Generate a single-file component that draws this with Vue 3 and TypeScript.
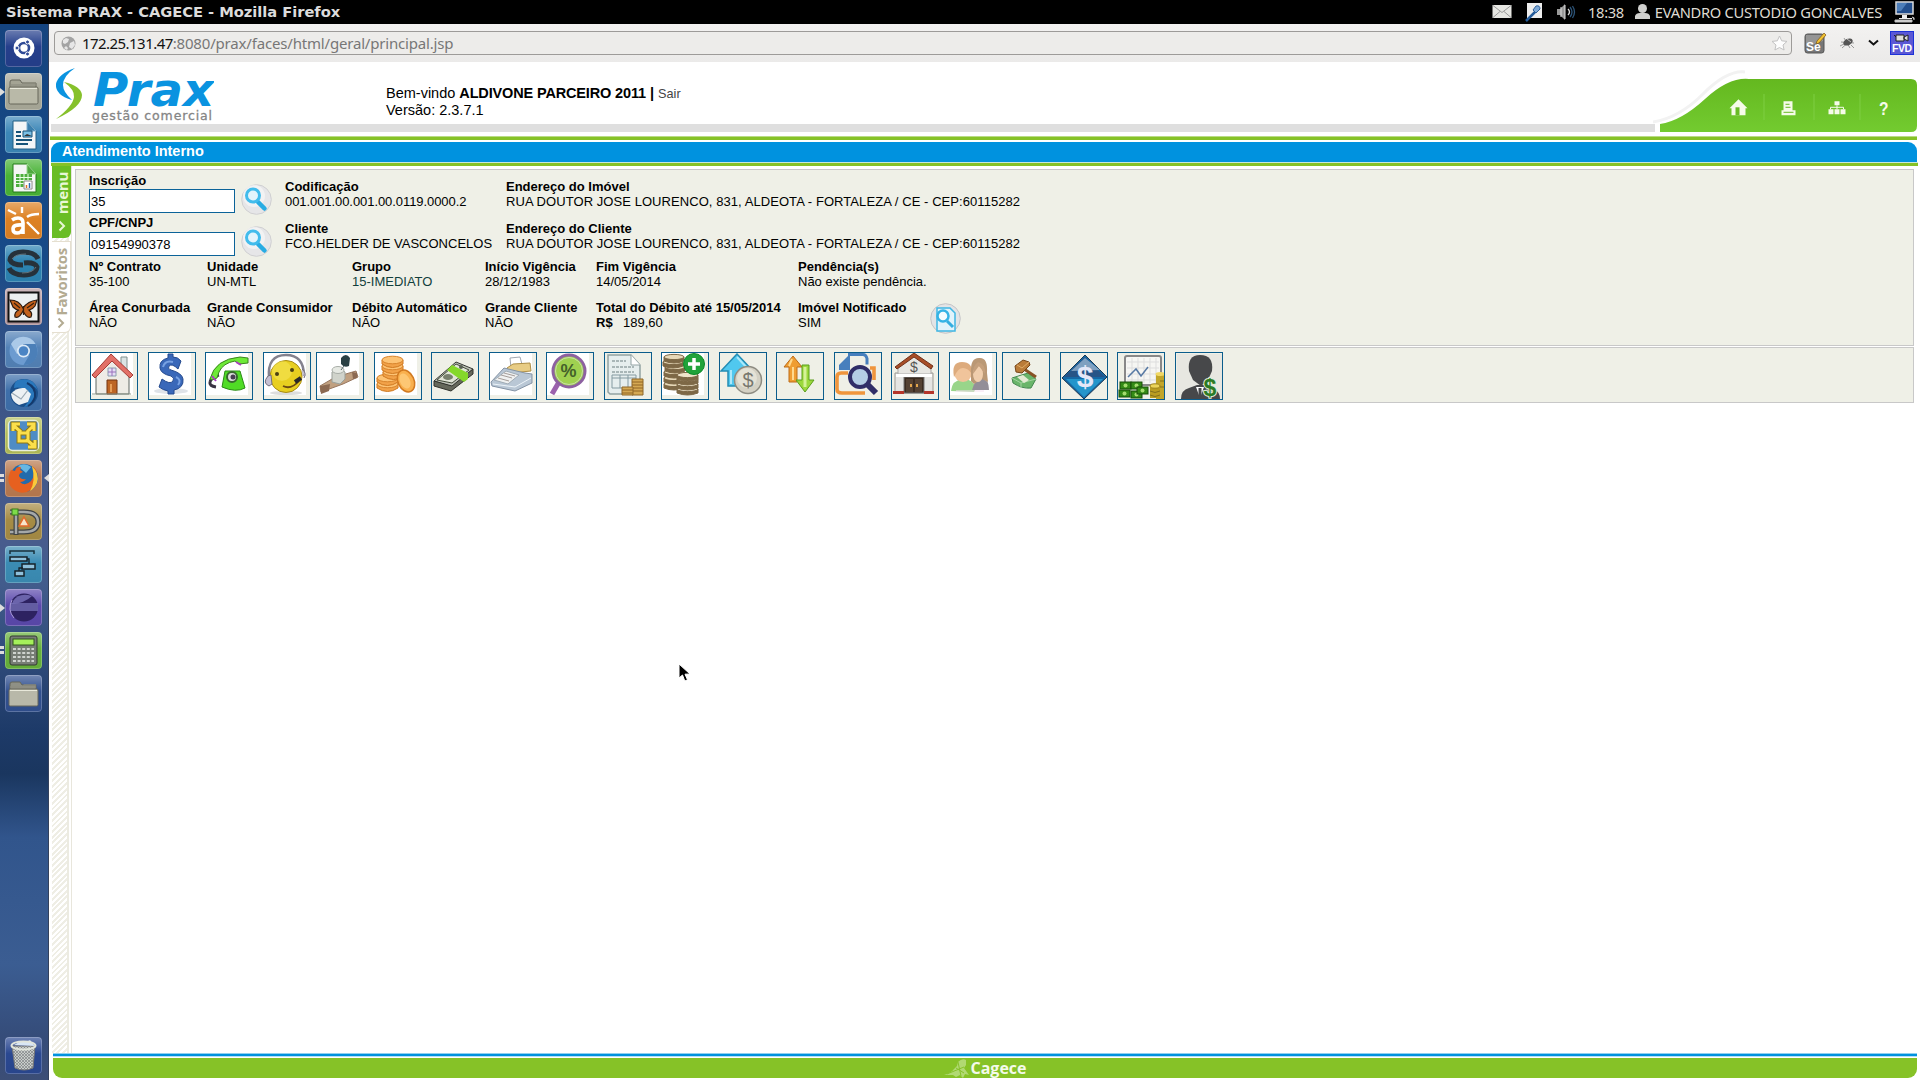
<script setup lang="ts">
import { ref } from 'vue'

interface LauncherItem { name: string; bg: string; art: string; left?: 'arrow' | 'double'; active?: boolean }
interface Tool { name: string; art: string; tight?: boolean; white?: boolean }
interface Cell { label: string; value: string; kind?: string }

const folder = (a: string, b: string) =>
  `<path d="M5 11V9q0-2 2-2h8l2 3h14v5H5z" fill="${a}" stroke="#66665a"/><path d="M5 11h12l2-2h12v4H5z" fill="#8d8d80" opacity=".6"/><rect x="4" y="14" width="29" height="17" rx="1.5" fill="${b}" stroke="#66665a"/><path d="M5 15.5h27" stroke="#e8e8da"/>`

const launcher: LauncherItem[] = [
  { name: 'dash', bg: '#253f8c', art: '<circle cx="19" cy="18" r="10.500" fill="#fff"/><circle cx="19" cy="18" r="5" fill="none" stroke="#2f4a96" stroke-width="2.600"/><g fill="#2f4a96" stroke="#fff" stroke-width="1"><circle cx="12" cy="18" r="2"/><circle cx="22.500" cy="12" r="2"/><circle cx="22.500" cy="24" r="2"/></g>' },
  { name: 'files', bg: '#a9a999', left: 'arrow', art: folder('#a4a494', '#b9b9a8') },
  { name: 'writer', bg: '#3c87b8', art: '<path d="M8 5h14l9 10v18H8z" fill="#f4f6f7" stroke="#205f85"/><path d="M22 5v10h9z" fill="#3a7fae" stroke="#7fb0cf"/><path d="M11 16h5M11 20h5M11 24h16M11 28h12" stroke="#165379" stroke-width="2"/><path d="M18 15h9v6h-9z" fill="#7ac0e6" stroke="#165379"/><path d="M19 20l3-2 5 2z" fill="#333"/>' },
  { name: 'calc-sheet', bg: '#49b336', art: '<path d="M8 5h14l9 10v18H8z" fill="#f4f6f4" stroke="#227a16"/><path d="M22 5v10h9z" fill="#4fa93f" stroke="#9bd890"/><path d="M11 15h16v13H11z" fill="#4eae3e"/><path d="M11 18.500h16M11 21.500h16M11 24.500h16M15 15v13M19 15v13M23 15v13" stroke="#e9ffe5"/><path d="M19 22h8v8h-8z" fill="#fff" stroke="#888"/><path d="M21.500 29v-3" stroke="#e07020" stroke-width="1.500"/><path d="M24.500 29v-5" stroke="#3169b5" stroke-width="1.500"/>' },
  { name: 'aptana', bg: '#dd8123', art: '<g stroke="#fff" fill="none" stroke-width="2.400"><path d="M22 15q4-3 12-3M22 20l12 12M17 11V5M11 12L3 8"/></g><path d="M7 18q3-2 6-2 5 0 5 5v11M18 23q-10-1-10 4 0 4 4 4t6-4" fill="none" stroke="#fff" stroke-width="3.600"/>' },
  { name: 'sync', bg: '#2c83b2', art: '<g fill="none" stroke="#26313a" stroke-width="5"><path d="M33 14q-3-7-15-7T5 15q2 5 13 5"/><path d="M4 23q3 7 15 7t13-8q-2-5-13-4"/></g><path d="M7 14q3-5 14-5M17 28q11 0 14-6" stroke="#61737d" fill="none"/>' },
  { name: 'butterfly', bg: '#b79aa0', art: '<rect x="3.500" y="4.500" width="30" height="29" fill="#eceff0" stroke="#111" stroke-width="2"/><path d="M18 20Q14 12 5 12l3 7q3 3 6 3-5 2-4 7 4 2 8-6 4 8 8 6 2-4-2-7 4-1 6-4l2-6q-9 1-14 8z" fill="#c4611c" stroke="#2b1a10" stroke-width="1.200"/><path d="M9 15l6 5M29 15l-7 5M18.500 18v9" stroke="#39200f" stroke-width="1.200"/>' },
  { name: 'chromium', bg: '#5382b7', art: '<circle cx="18.500" cy="20" r="14" fill="#6c9bd0"/><path d="M18.500 20V13h12A14 14 0 0 0 6 13l6 10z" fill="#aac9e8"/><path d="M18.500 20l6 4-6 10q12 0 14-12 0-5-2-9H18z" fill="#4b7fb8"/><circle cx="18.500" cy="20" r="6.500" fill="#ddeaf6"/><circle cx="18.500" cy="20" r="4.800" fill="#4a84c4"/>' },
  { name: 'thunderbird', bg: '#3e6faa', art: '<circle cx="19" cy="19" r="14" fill="#1b4f8a"/><path d="M14 6q15-4 19 11-3-5-7-5 6 6 3 14-3 6-10 7 8-8 3-14-4-7-13-5 0-6 4-8z" fill="#2a78bd"/><path d="M6 20q5-7 14-6l6 6-3 8-9 3q-7-3-8-11z" fill="#edf1f4"/><path d="M7 19l9 6 7-9" fill="none" stroke="#9ba9b4" stroke-width="1.200"/><path d="M22 9q9 4 8 14-2 6-7 9" fill="none" stroke="#15396b" stroke-width="2"/>' },
  { name: 'vmware', bg: '#b3bd58', art: '<rect x="3.500" y="3.500" width="30" height="30" rx="4" fill="#4f8cc5" stroke="#e9efda" stroke-width="1.500"/><g fill="none" stroke="#907712" stroke-width="5"><path d="M8 14V7h7M8 8l8 7M22 7h7v7M29 8l-7 7M30 23v7h-7M29 29l-8-7M14 16v8h9v-8z"/></g><g fill="none" stroke="#fcdf4b" stroke-width="3"><path d="M8 14V7h7M8 8l8 7M22 7h7v7M29 8l-7 7M30 23v7h-7M29 29l-8-7M14 16v8h9v-8z"/></g>' },
  { name: 'firefox', bg: '#b97a50', left: 'double', active: true, art: '<circle cx="19" cy="18" r="14" fill="#236bac"/><path d="M13 6q7-4 13 1l-5 6z" fill="#67b7e3"/><path d="M6 10q-6 12 2 19 9 7 18 1 8-7 6-17-1-5-5-7 4 9-1 15-6 6-11 1 4 0 6-3-5 1-7-3 0-3 4-4l-3-2q2-4-1-3-3 0-4 4z" fill="#e6601f"/><path d="M27 6q8 8 5 17-3 6-7 8 6-10 2-25z" fill="#f9c93b"/>' },
  { name: 'pencil', bg: '#a68c45', art: '<path d="M5 9h14q14 0 14 10T19 29H5" fill="none" stroke="#404446" stroke-width="5"/><path d="M5 9h14q14 0 14 10T19 29H5" fill="none" stroke="#a4a8a9" stroke-width="2.500"/><path d="M11 12v20" stroke="#404446" stroke-width="5"/><path d="M11 12v19" stroke="#a4a8a9" stroke-width="2.500"/><rect x="7" y="6" width="6" height="6" fill="#7ddc4a" stroke="#377c1a"/><path d="M19 14l5 9H14z" fill="#f8e5ca" stroke="#e4692b" stroke-width="1.500"/>' },
  { name: 'gantt', bg: '#3b8cb4', art: '<path d="M5 8V5h24v3" fill="none" stroke="#17303d" stroke-width="1.500"/><g fill="#8fc1dc" stroke="#16222a" stroke-width="1.500"><path d="M5 11h17v4H5zM17 18h13v5H17zM10 25h9v5h-9z"/></g><path d="M22 13h2v5M18 22h-4v3" fill="none" stroke="#16222a" stroke-width="1.300"/>' },
  { name: 'eclipse', bg: '#5b49ac', left: 'arrow', art: '<circle cx="19" cy="18.500" r="14" fill="#2d2261"/><path d="M8 12q6-9 19-5-7 7-20 8z" fill="#6b64ab"/><path d="M5 14h28v8H5z" fill="#7a76bd" opacity=".7"/><path d="M7 11q-5 10 2 18" fill="none" stroke="#a99ad8"/>' },
  { name: 'calculator', bg: '#67b23b', left: 'double', art: '<rect x="5" y="4" width="27" height="29" rx="2" fill="#777d75" stroke="#343a33"/><rect x="8" y="7" width="21" height="6" fill="#a5f05b" stroke="#31551e"/><g stroke="#cfd3ce" stroke-width="2.200" stroke-dasharray="3 1.600"><path d="M8 17h21M8 21h21M8 25h21M8 29h21"/></g>' },
  { name: 'folder', bg: '#31508f', art: folder('#8f9085', '#b8b8a9') },
]

const bill = (x: number, y: number) => `<g transform="translate(${x} ${y})"><rect width="11" height="7" fill="#338a16" stroke="#174d08"/><circle cx="5.500" cy="3.500" r="2" fill="#a4dc6f"/></g>`
const coin = (x: number, y: number, w: number, a: string, b: string) => `<path d="M${x} ${y}v4q${w / 2} 4 ${w} 0v-4z" fill="${b}" stroke="${b}"/><ellipse cx="${x + w / 2}" cy="${y}" rx="${w / 2}" ry="2.600" fill="${a}" stroke="${b}"/>`
const goldCoin = (x: number, y: number) => `<path d="M${x} ${y}v4q10.500 7 21 0v-4z" fill="#f2a249" stroke="#cf7a22"/><ellipse cx="${x + 10.5}" cy="${y}" rx="10.500" ry="3.800" fill="#fdc374" stroke="#d8842c"/>`

const tools: Tool[] = [
  { name: 'house', white: true, art: '<path d="M30 4h6v14h-6z" fill="#dbe4e4" stroke="#80908e"/><path d="M5 20L21 5l17 16v20H5z" fill="#eeece6" stroke="#5e6662"/><path d="M1 22L20 1l22 21-3 3-18-17L4 25z" fill="#e27067" stroke="#a53c35"/><path d="M16 27h10v14H16z" fill="#bd6524" stroke="#733512"/><path d="M20 31v8" stroke="#e89e57" stroke-width="2"/><path d="M17 15h8v8h-8z" fill="#e5ddf5" stroke="#8a9fae"/><path d="M21 15v8M17 19h8" stroke="#9a72bb"/><path d="M1 41h39" stroke="#919b8d"/>' },
  { name: 'dollar', white: true, art: '<ellipse cx="22" cy="38" rx="17" ry="3" fill="#dfe3e8"/><path d="M32 8q-3-4-8-4V1h-5v4Q10 7 11 15q1 6 11 8 4 2 2 5-3 4-11-2l-3 8q4 3 9 4v3h6v-4q10-2 9-11-1-6-12-9-4-1-2-4 3-3 9 3z" fill="#3a68b9" stroke="#254a8e"/><path d="M14 14q2-7 10-5M27 24q6 3 2 8" stroke="#78a1e2" fill="none" stroke-width="2"/>' },
  { name: 'phone', white: true, art: '<path d="M10 34q-7-1-6-5 1-5 9-7" fill="none" stroke="#393342" stroke-width="3"/><path d="M4 26Q9 6 34 4l8 1v5l-9 1-4-3Q17 10 13 19l-2 6-5 2z" fill="#6eea37" stroke="#3b851f"/><path d="M19 18h15l5 17q-9 5-23-1z" fill="#50dc25" stroke="#2b8c15"/><circle cx="26" cy="24" r="5" fill="#ddd" stroke="#39672f" stroke-width="2"/><circle cx="27" cy="24" r="2.500" fill="#463d50"/><path d="M30 9l5 3M6 23l4 5" stroke="#a93ec0" stroke-width="2"/>' },
  { name: 'support', white: true, art: '<ellipse cx="22" cy="40" rx="16" ry="2" fill="#ddd"/><circle cx="22" cy="23.500" r="16" fill="#e8cf20" stroke="#a88b15"/><circle cx="18" cy="18" r="10" fill="#f8ea60" opacity=".5"/><path d="M5 25Q3 2 22 2q18 0 18 21" fill="none" stroke="#84828e" stroke-width="2.500"/><path d="M4 23q-6 7 1 10l3-2-1-9zM38 16q5 4 2 9" fill="#c5c0d2" stroke="#75707e"/><circle cx="13" cy="21" r="2" fill="#4b4012"/><circle cx="28" cy="17" r="2" fill="#4b4012"/><path d="M19 33q8 4 16-5" fill="none" stroke="#6b4a13" stroke-width="1.800"/><path d="M31 29l6-4" stroke="#292929" stroke-width="4"/>' },
  { name: 'meter', tight: true, white: true, art: '<path d="M3 33l12-7 7-3 17-5 2 6-15 7-22 8z" fill="#c0a080" stroke="#97765e"/><path d="M3 33l10-2-1 7-8 3zM35 19l5 1v5l-4 1z" fill="#8c6a52"/><path d="M15 19q7-5 13 0v7l-5 5-8-2z" fill="#d0d3cb" stroke="#9aa09a"/><ellipse cx="21" cy="17" rx="6" ry="3.500" fill="#e6e9e3" stroke="#a9aea8"/><path d="M24 5q5-6 9 0l-1 8q-5 2-8-2z" fill="#2a4044"/><path d="M27 13l-3 4" stroke="#58676a"/>' },
  { name: 'gold', white: true, art: goldCoin(2, 31) + goldCoin(2, 25) + goldCoin(8, 19) + goldCoin(7, 13) + goldCoin(7, 7) + '<ellipse cx="31" cy="28" rx="8" ry="11.500" transform="rotate(-25 31 28)" fill="#f9b04e" stroke="#d27a21" stroke-width="1.500"/><ellipse cx="30" cy="28" rx="5" ry="8" transform="rotate(-25 30 28)" fill="#fdc774"/>' },
  { name: 'cash', art: '<path d="M2 28l22-19 17 7-20 18z" fill="#bec2b8" stroke="#343732"/><path d="M2 28v5l17 5 22-17v-5L20 33z" fill="#65685b" stroke="#30322c"/><path d="M5 27L24 11l13 6-17 13z" fill="#e1e5d8" stroke="#444d3b"/><path d="M15 17l5-5 16 8v6l-4 3z" fill="#85d82a"/><ellipse cx="16" cy="24" rx="5" ry="3" fill="#78806e"/><circle cx="29" cy="14" r="2" fill="#596055"/>' },
  { name: 'register', white: true, art: '<path d="M20 5l10-1 3 11H21z" fill="#fff" stroke="#a2a8b0"/><path d="M17 15l6-4 17-1 1 8-20 2z" fill="#e8cc84" stroke="#ae8e45"/><path d="M1 29l13-14 21 5 7 1v9l-17 8L2 33z" fill="#b9c7d5" stroke="#8493a5"/><path d="M4 27l12-9 13 4-11 9z" fill="#eff1f1" stroke="#9fabb5"/><path d="M8 25l11 3M11 22l11 3M14 20l11 3" stroke="#a59d99"/><path d="M3 31l22 3 16-9" stroke="#edf4f9" fill="none"/>' },
  { name: 'percent', white: true, art: '<path d="M12 29L5 41" stroke="#9b62ad" stroke-width="5"/><circle cx="22" cy="18" r="16" fill="#a0d150" stroke="#8d61a1" stroke-width="3"/><circle cx="22" cy="18" r="13.500" fill="none" stroke="#c9dfaa"/><text x="21.500" y="24" text-anchor="middle" font-size="18" font-weight="700" font-family="Liberation Sans" fill="#44612a">%</text>' },
  { name: 'invoice', art: '<path d="M3 2h23l9 10v29H5l-2-2z" fill="#e6eeee" stroke="#92a2a3" stroke-width="1.500"/><path d="M26 2v10h9" fill="#fff" stroke="#92a2a3"/><path d="M7 8h14M7 14h22M7 19h22" stroke="#6d7e80" stroke-width="1.200" stroke-dasharray="3 1"/><path d="M7 22h24v13H7zM7 25h24M15 22v13M23 22v13" fill="none" stroke="#849aa1"/><path d="M27 26h11v16H27z" fill="#d5a953" stroke="#8e6629"/><path d="M27 29h11M27 32h11M27 35h11M27 38h11" stroke="#906425"/><path d="M17 34h11v8H17z" fill="#d5a953" stroke="#8e6629"/><path d="M17 37h11M17 40h11" stroke="#906425"/>' },
  { name: 'coins-add', white: true, art: [31, 25, 19, 14, 9, 4].map(y => coin(1 + (y % 3), y, 20, '#e6d8b8', '#7d6846')).join('') + [36, 31, 26, 22].map(y => coin(15, y, 21, '#efe4ca', '#7d6846')).join('') + '<circle cx="32" cy="11" r="10.500" fill="#20a33a" stroke="#0c8a29"/><path d="M32 5v12M26 11h12" stroke="#fff" stroke-width="3.500"/>' },
  { name: 'raise', art: '<path d="M17 1l16 17h-7v15H8V18H1z" fill="#50c8ef" stroke="#238cb4" stroke-width="1.500"/><path d="M17 4l10 11M11 17v14" stroke="#abe8fa" stroke-width="2"/><circle cx="28" cy="27" r="13.500" fill="#d4d1c4" stroke="#8e8c82" stroke-width="1.500"/><circle cx="27" cy="25" r="10" fill="#efede3" opacity=".6"/><text x="28" y="34" text-anchor="middle" font-size="20" font-family="Liberation Sans" fill="#77776e">$</text>' },
  { name: 'swap', art: '<path d="M16 3l9 11h-5v15h-8V14H7z" fill="#ef9d32" stroke="#bd6c19"/><path d="M15 6l-3 7M16 14v13" stroke="#ffd98d" stroke-width="2"/><path d="M25 12h7v15h5l-9 12-9-12h6z" fill="#9bd83c" stroke="#5b9f1c"/><path d="M28 14v20" stroke="#d5f299" stroke-width="3"/>' },
  { name: 'search-docs', art: '<path d="M13 1.500h15q3 0 4 4v6" fill="none" stroke="#477fbd" stroke-width="3"/><path d="M15 1L4 12v5h11z" fill="#477fbd"/><path d="M13 20H6q-4 0-4 4v12q0 4 5 4h23M35 15h4v12" fill="none" stroke="#f0953c" stroke-width="3.600"/><circle cx="25" cy="24" r="10" fill="#b4cee5" stroke="#302e68" stroke-width="4"/><path d="M32 31l9 9" stroke="#302e68" stroke-width="6"/>' },
  { name: 'bank', art: '<path d="M3 20h38v20H3z" fill="#e4e4e2" stroke="#9b9993"/><path d="M6 12L22 2l17 11v8H6z" fill="#e7e6e2" stroke="#aaa"/><path d="M3 14L22 0l19 13-2 3L22 4 5 16z" fill="#a84d27" stroke="#71321c"/><path d="M12 24h20v16H12z" fill="#3a2b20" stroke="#777"/><path d="M14 26h7v13h-7zM23 26h7v13h-7z" fill="#544133"/><path d="M4 21h36v3H4z" fill="#fff"/><path d="M1 38h11v3H1zM32 38h10v3H32z" fill="#b4352a"/><path d="M19 31v3M25 31v3" stroke="#e3a64c" stroke-width="2"/><text x="22" y="19" text-anchor="middle" font-size="14" font-family="Liberation Sans" fill="#555">$</text>' },
  { name: 'people', white: true, art: '<g opacity=".88"><path d="M1 38q1-11 12-12 10 0 13 9l-2 4z" fill="#8bd07a"/><path d="M22 37q3-11 9-12 8 1 8 12z" fill="#85808a"/><circle cx="13" cy="20" r="9" fill="#efbd8e"/><path d="M4 24Q1 9 12 9q11 0 10 12-4-6-9-6-5 0-9 9z" fill="#d9a06c"/><path d="M21 20Q20 4 30 5q8 0 7 15l1 9-6-3-8 5-3-3z" fill="#b18a62"/><ellipse cx="28" cy="21" rx="5" ry="8" fill="#efc8a2"/><path d="M28 9q-5 3-5 12l6-8 6 8q1-10-7-12z" fill="#bc926a"/></g><path d="M6 38h28" stroke="#f5dff0"/>' },
  { name: 'auction', tight: true, art: '<path d="M9 25l16-5 8 6-5 9q-9 1-18-5z" fill="#6ab56a" stroke="#448750"/><path d="M9 25l9 5 15-4M18 30v5" fill="none" stroke="#a2d3a0"/><path d="M14 24l6-2 6 5-5 3z" fill="#e4ead3"/><path d="M18 14l15 10" stroke="#885224" stroke-width="3"/><path d="M12 13l8-6 6 2 1 3-8 8-6-1z" fill="#ba7c39" stroke="#774719"/><path d="M14 12l5 3 7-6" stroke="#e1ae68" fill="none"/>' },
  { name: 'diamond', art: '<path d="M24 2l22 22-23 22L1 25z" fill="#1568a5" stroke="#1c3852"/><path d="M24 4l20 20H3z" fill="#275487"/><path d="M24 5L10 18l29-1z" fill="#a5c0d8" opacity=".7"/><path d="M5 26h37L23 44z" fill="#2495cb"/><text x="24" y="34" text-anchor="middle" font-size="30" font-weight="700" font-family="Liberation Sans" fill="#e4e7f7">$</text>' },
  { name: 'finance', art: '<rect x="7" y="3" width="36" height="29" rx="2" fill="#f6f6f3" stroke="#888" stroke-width="2"/><path d="M9 9h32M9 15h32M9 21h32M9 27h32M14 5v25M20 5v25M26 5v25M32 5v25M38 5v25" stroke="#ddd"/><path d="M10 24l8-8 5 7 7-9" fill="none" stroke="#5779a4" stroke-width="1.500"/>' + bill(2, 29) + bill(13, 29) + bill(1, 37) + bill(13, 38) + bill(19, 34) + '<path d="M38 20h9v26h-9z" fill="#c2a629"/><ellipse cx="42.500" cy="21" rx="5" ry="2" fill="#f1d866"/><path d="M32 33h10v12H32z" fill="#ba9d22"/><ellipse cx="37" cy="33" rx="5" ry="2.200" fill="#ecd45a" stroke="#9e831c"/><path d="M32 38q5 3 10 0M32 42q5 3 10 0M42 28h5M42 34h5" fill="none" stroke="#83701b"/>' },
  { name: 'debtor', art: '<path d="M1 1h46v46H1z" fill="#e7e7e1"/><path d="M5 46q0-9 8-11l8-3h7l10 4q6 3 6 10z" fill="#47484a"/><path d="M13 18Q11 2 24 2q14 0 12 16l-4 9-7 6-8-6z" fill="#47484a"/><path d="M20 34l4 11 4-11" fill="#fff"/><path d="M24 35v10" stroke="#47484a" stroke-width="3"/><text x="34" y="43" text-anchor="middle" font-size="23" font-weight="700" font-family="Liberation Sans" fill="#2b7b25" stroke="#e0ead6" stroke-width="2" paint-order="stroke">$</text>' },
]

const columns: Cell[][] = [
  [{ label: 'Nº Contrato', value: '35-100' }, { label: 'Área Conurbada', value: 'NÃO' }],
  [{ label: 'Unidade', value: 'UN-MTL' }, { label: 'Grande Consumidor', value: 'NÃO' }],
  [{ label: 'Grupo', value: '15-IMEDIATO', kind: 'link' }, { label: 'Débito Automático', value: 'NÃO' }],
  [{ label: 'Início Vigência', value: '28/12/1983' }, { label: 'Grande Cliente', value: 'NÃO' }],
  [{ label: 'Fim Vigência', value: '14/05/2014' }, { label: 'Total do Débito até 15/05/2014', value: '189,60', kind: 'money' }],
  [{ label: 'Pendência(s)', value: 'Não existe pendência.' }, { label: 'Imóvel Notificado', value: 'SIM' }],
]
const columnWidths = [118, 145, 133, 111, 202, 130]
const address = 'RUA DOUTOR JOSE LOURENCO, 831, ALDEOTA - FORTALEZA / CE - CEP:60115282'

const inscricao = ref('35')
const cpf = ref('09154990378')
</script>

<template>
  <div class="desktop">
    <header class="panel-top">
      <span class="win-title">Sistema PRAX - CAGECE - Mozilla Firefox</span>
      <div class="tray">
        <svg class="t-mail" width="20" height="16" viewBox="0 0 20 16"><rect x=".5" y="1" width="19" height="13" fill="#e6e6e2"/><path d="M1 1.500l9 7 9-7M1 13.500l7-6M19 13.500l-7-6" fill="none" stroke="#999"/></svg>
        <svg class="t-note" width="20" height="20" viewBox="0 0 20 20"><path d="M3 1h15v15H3z" fill="#eee"/><path d="M2 19l9-9" stroke="#245b9a" stroke-width="2.500"/><path d="M9 8l3-4q4-1 4 3l-4 4z" fill="#7ea9d7" stroke="#2d5f99"/></svg>
        <svg class="t-vol" width="20" height="20" viewBox="0 0 20 20"><path d="M1 7h3l5-5v16l-5-5H1z" fill="#999"/><path d="M5 5v10M9 3v14" stroke="#ddd"/><path d="M12 7q3 3 0 6" stroke="#ddd" fill="none" stroke-width="1.300"/><path d="M14 5q4 5 0 10M16.500 4q4 6 0 12" stroke="#2d5478" fill="none" stroke-width="1.300"/></svg>
        <span class="clock">18:38</span>
        <svg class="t-user" width="15" height="16" viewBox="0 0 15 16"><circle cx="7.500" cy="4.500" r="4.500" fill="#d0d0ce"/><path d="M0 15v-3q1-3 5-3h5q4 0 5 3v3z" fill="#d0d0ce"/></svg>
        <span class="user">EVANDRO CUSTODIO GONCALVES</span>
        <svg class="t-pc" width="21" height="22" viewBox="0 0 21 22"><path d="M2 1h17v12H2z" fill="#234f8e" stroke="#ddd" stroke-width="1.500"/><path d="M3 2h10l-6 8H3z" fill="#4d7eba"/><path d="M8 14h5v3h5v1H5v-1h3z" fill="#eee"/><path d="M1 19h17v2H1zM18 16q3 0 2 3" fill="#ddd" stroke="#bbb"/></svg>
      </div>
    </header>

    <div class="below">
      <nav class="launcher">
        <div v-for="item in launcher" :key="item.name" class="tile-row">
          <i v-if="item.left === 'arrow'" class="run-arrow"></i>
          <i v-if="item.left === 'double'" class="run-double"></i>
          <i v-if="item.active" class="active-arrow"></i>
          <div class="tile" :style="{ backgroundColor: item.bg }"><svg width="37" height="37" viewBox="0 0 37 37" v-html="item.art"></svg></div>
        </div>
        <div class="tile-row trash">
          <div class="tile trash-tile">
            <svg width="37" height="37" viewBox="0 0 37 37"><defs><pattern id="mesh" width="3" height="3" patternUnits="userSpaceOnUse"><path d="M0 0l3 3M3 0L0 3" stroke="#74797a" stroke-width=".6"/></pattern></defs><path d="M7 9l3 22q9 4 18 0l2-22z" fill="#c8ccca" stroke="#777"/><path d="M7 9l3 22q9 4 18 0l2-22z" fill="url(#mesh)"/><path d="M9 8l7-4 5 1 4-2 5 6z" fill="#d8e6f5"/><ellipse cx="18.500" cy="8.500" rx="12" ry="4" fill="none" stroke="#e1e5dc" stroke-width="2"/></svg>
          </div>
        </div>
      </nav>

      <main class="browser">
        <div class="toolbar">
          <div class="url">
            <svg width="15" height="15" viewBox="0 0 15 15"><circle cx="7.500" cy="7.500" r="7" fill="#a3a3a3"/><path d="M2 4l3-2 3 1-1 3-3 2-2-1zM9 7l4-2 1 4-3 4-3-2zM5 10l2 2-1 2-3-2z" fill="#e6e6e6"/></svg>
            <b>172.25.131.47</b><span>:8080/prax/faces/html/geral/principal.jsp</span>
            <svg class="star" width="17" height="16" viewBox="0 0 17 16"><path d="M8.500 1l2.200 4.800 5.300.600-4 3.600 1.100 5-4.600-2.500L3.900 15 5 10 1 6.400l5.300-.600z" fill="#fdfdfd" stroke="#c2c2c2"/></svg>
          </div>
          <svg class="ext-se" width="23" height="22" viewBox="0 0 23 22"><rect x="1" y="2" width="19" height="19" rx="2.500" fill="#777" stroke="#555"/><path d="M2 3h17v6L2 15z" fill="#aaa" opacity=".6"/><text x="2" y="18.500" font-family="Liberation Sans" font-weight="700" font-size="12" fill="#fff">Se</text><path d="M12 12l1-3 7-8 2 2-7 8z" fill="#f2c333" stroke="#7a5215" stroke-width=".7"/></svg>
          <svg class="ext-bug" width="17" height="15" viewBox="0 0 17 15"><path d="M2 6l13 1M3 12l10-9M5 2l6 10M1 10l4-2M12 9l3 3" stroke="#999"/><ellipse cx="9" cy="6" rx="5" ry="3.200" transform="rotate(-25 9 6)" fill="#555"/><path d="M8 3l4 3" stroke="#bbb"/></svg>
          <svg class="ext-chev" width="11" height="8" viewBox="0 0 11 8"><path d="M1 1.500l4.500 4 4.500-4" fill="none" stroke="#111" stroke-width="2"/></svg>
          <svg class="ext-fvd" width="24" height="24" viewBox="0 0 24 24"><rect x=".5" y=".5" width="23" height="23" fill="#5b58d5" stroke="#1c31d8"/><path d="M6 4h8v6H6zM14 6l4-2v6l-4-2zM4 4l2 2" fill="#ddd" stroke="#222"/><text x="12" y="21" text-anchor="middle" font-family="Liberation Sans" font-weight="700" font-size="10.500" textLength="20" fill="#fff">FVD</text></svg>
        </div>

        <section class="masthead">
          <svg class="logo" width="164" height="62" viewBox="0 0 164 62">
            <path d="M25 6Q8 12 6 22 5 33 22 38 13 30 13 23 13 14 25 6z" fill="#0a93e0"/><path d="M14 20Q31 24 32 33 32 45 6 57 23 44 24 35 25 28 14 20z" fill="#86c12b"/>
            <text x="43" y="43.500" font-family="DejaVu Sans" font-weight="700" font-style="italic" font-size="46" textLength="121" lengthAdjust="spacingAndGlyphs" fill="#0a93e0">Prax</text>
            <text x="42" y="57.500" font-family="DejaVu Sans" font-size="12.500" textLength="120" fill="#858585" stroke="#858585" stroke-width=".3">gestão comercial</text>
          </svg>
          <div class="welcome">
            <div class="hello">Bem-vindo <strong>ALDIVONE PARCEIRO 2011</strong> <b>|</b> <a>Sair</a></div>
            <div class="version">Versão: 2.3.7.1</div>
          </div>
          <svg class="quick" width="264" height="70" viewBox="0 0 264 70">
            <defs><linearGradient id="gq" x2="0" y2="1"><stop offset="0" stop-color="#64b81f"/><stop offset="1" stop-color="#73cb30"/></linearGradient></defs>
            <path d="M0 60Q26 56 50 32T92 10" fill="none" stroke="#f2f2f2" stroke-width="3"/>
            <path d="M7 62Q28 59 52 37T96 17H258q6 0 6 6v41q0 6-6 6H7z" fill="url(#gq)"/>
            <path d="M111 32v26M161 32v26M207 32v26" stroke="#7fce42"/>
            <g transform="translate(-.5 -.7)"><g fill="#f6fbe9"><path d="M77 47l9-9 9 9h-2v7h-14v-7z"/><path d="M83 46h4v8h-4z" fill="#68bb24"/><path d="M131 40h9v9h3v5h-14v-5h2z"/><path d="M182 40h5v4h-5zM176 48h5v5h-5zM182 48h5v5h-5zM188 48h5v5h-5z"/></g>
            <path d="M133 43h4M133 46h5M131 51h10" stroke="#68bb24"/><path d="M184.500 44v4M178 48v-2h13v2" fill="none" stroke="#f6fbe9"/>
            <text x="226.500" y="54" font-family="Liberation Sans" font-weight="700" font-size="19" textLength="9.500" lengthAdjust="spacingAndGlyphs" fill="#f6fbe9">?</text></g>
          </svg>
        </section>
        <div class="gray-rule"></div>
        <div class="green-rule"></div>
        <div class="titlebar"><span>Atendimento Interno</span></div>
        <div class="title-under"></div>

        <div class="content">
          <aside class="side">
            <div class="tab menu"><span>menu</span><svg width="8" height="12" viewBox="0 0 8 12"><path d="M1.500 1.500l4.500 4.500-4.500 4.500" fill="none" stroke="#e8f7d5" stroke-width="2"/></svg></div>
            <div class="tab fav"><span>Favoritos</span><svg width="8" height="12" viewBox="0 0 8 12"><path d="M1.500 1.500l4.500 4.500-4.500 4.500" fill="none" stroke="#b3ab92" stroke-width="2"/></svg></div>
          </aside>
          <div class="workspace">
            <section class="card info">
              <div class="lookup">
                <div class="inputs">
                  <label class="lbl" for="insc">Inscrição</label><input id="insc" v-model="inscricao" />
                  <label class="lbl second" for="cpf">CPF/CNPJ</label><input id="cpf" v-model="cpf" class="low" />
                </div>
                <div class="lenses">
                  <svg v-for="n in 2" :key="n" width="31" height="31" viewBox="0 0 31 31"><circle cx="15.500" cy="15.500" r="14.800" fill="#e6e6e8" stroke="#cfcfd1"/><circle cx="13" cy="12" r="11" fill="#f6f6f8" opacity=".7"/><path d="M17 18l6.500 6.500" stroke="#29ace3" stroke-width="4.500" stroke-linecap="round"/><circle cx="12" cy="11.500" r="6.500" fill="#e3f4fc" stroke="#42bcec" stroke-width="3"/></svg>
                </div>
                <div class="pair-col cod">
                  <div><div class="lbl">Codificação</div><div class="val code">001.001.00.001.00.0119.0000.2</div></div>
                  <div><div class="lbl">Cliente</div><div class="val">FCO.HELDER DE VASCONCELOS</div></div>
                </div>
                <div class="pair-col">
                  <div><div class="lbl">Endereço do Imóvel</div><div class="val addr">{{ address }}</div></div>
                  <div><div class="lbl">Endereço do Cliente</div><div class="val addr">{{ address }}</div></div>
                </div>
              </div>
              <div class="facts">
                <div v-for="(col, i) in columns" :key="i" class="fact-col" :style="{ width: columnWidths[i] + 'px' }">
                  <div v-for="c in col" :key="c.label" class="fact">
                    <div class="lbl">{{ c.label }}</div>
                    <div class="val" :class="c.kind"><b v-if="c.kind === 'money'">R$</b>{{ c.value }}</div>
                  </div>
                </div>
                <svg class="doc-lens" width="31" height="31" viewBox="0 0 31 31"><circle cx="15.500" cy="15.500" r="14.800" fill="#e3e4e6" stroke="#c4c4c6"/><path d="M7 5h13l5 5v18H7z" fill="#e1f3fb" stroke="#3fb7e4" stroke-width="1.500"/><path d="M17 18l6 6" stroke="#35aee0" stroke-width="3"/><circle cx="13" cy="13" r="5.500" fill="#f3fbff" stroke="#35b3e6" stroke-width="2.500"/></svg>
              </div>
            </section>
            <section class="card tools">
              <button v-for="t in tools" :key="t.name" class="tool" :class="{ tight: t.tight, white: t.white }" :aria-label="t.name">
                <svg width="46" height="46" viewBox="0 0 46 46" v-html="t.art"></svg>
              </button>
            </section>
          </div>
        </div>

        <div class="blue-rule"></div>
        <footer class="foot">
          <svg width="26" height="19" viewBox="0 0 26 19"><path d="M0 16q7-2 10-6l3-3 1-4q4-4 8-2v5l-2 3 5 7-4-1-2 4-3-3-4 2-3-2z" fill="#bfe08d" opacity=".75"/><path d="M3 15l17-7M12 9l8 5M14 3l3 14" stroke="#86c22a"/></svg>
          <span>Cagece</span>
        </footer>
      </main>
    </div>
    <svg class="cursor" width="14" height="20" viewBox="0 0 14 20"><path d="M1 1v14l3.500-3 2.300 6 2.700-1.200-2.500-5.600 5-.2z" fill="#000" stroke="#fff"/></svg>
  </div>
</template>

<style>
html, body { margin: 0; background: #fff; overflow: hidden; }
</style>

<style scoped>
.desktop { width: 1920px; height: 1080px; display: flex; flex-direction: column; font-family: "Liberation Sans", Arial, sans-serif; color: #000; overflow: hidden; position: relative; }
svg { display: block; flex: none; }
.panel-top { height: 24px; background: #000; color: #dfdbd2; display: flex; align-items: center; justify-content: space-between; flex: none; }
.win-title { font: 700 14.700px/24px "DejaVu Sans", sans-serif; padding-left: 6px; color: #dcdcdc; white-space: nowrap; letter-spacing: -.04px; }
.tray { display: flex; align-items: center; font: 14.700px/24px "Noto Sans", sans-serif; padding-right: 5px; white-space: nowrap; }
.t-note { margin-left: 12px; }
.t-vol { margin-left: 12px; }
.clock { margin-left: 12px; letter-spacing: -.35px; }
.t-user { margin-left: 11px; }
.user { margin-left: 5px; letter-spacing: -.3px; }
.t-pc { margin-left: 12px; }
.below { flex: 1; display: flex; min-height: 0; }
.launcher { width: 49px; flex: none; box-sizing: border-box; padding-top: 6px; padding-bottom: 6px; display: flex; flex-direction: column; gap: 6px; background: linear-gradient(#15447f 0, #174a88 22%, #3c5486 34%, #485c8d 49%, #425c8c 53%, #1d3a68 67%, #1a365f 71%, #31558c 77%, #3b5d92 89%, #354c79 96%, #3c4e76 100%); border-right: 1px solid #33415c; }
.tile-row { height: 37px; padding-left: 5px; position: relative; flex: none; }
.tile { width: 37px; height: 37px; border-radius: 4px; box-shadow: inset 0 0 0 1px rgba(255,255,255,.22); background-image: linear-gradient(rgba(255,255,255,.32), rgba(255,255,255,0) 45%, rgba(0,0,0,.04)); }
.trash { margin-top: auto; }
.trash-tile { background-color: #2a4891; }
.run-arrow { position: absolute; left: 0; top: 15px; border: 4px solid transparent; border-left: 5px solid #ddd; border-right: 0; }
.run-double { position: absolute; left: 0; top: 14px; width: 4px; height: 2px; border-top: 3px solid #ddd; border-bottom: 3px solid #ddd; }
.active-arrow { position: absolute; right: -1px; top: 14px; border: 4px solid transparent; border-right: 5px solid #ddd; border-left: 0; }
.browser { flex: 1; min-width: 0; display: flex; flex-direction: column; background: #fff; }
.toolbar { height: 38px; flex: none; background: linear-gradient(#f3f2f1, #ebeae9); display: flex; align-items: center; padding-left: 5px; }
.url { width: 1738px; height: 24px; box-sizing: border-box; border: 1px solid #9d9b99; border-radius: 4px; background: #edecea; display: flex; align-items: center; padding-left: 6px; font: 15px/22px "Noto Sans", sans-serif; color: #777; white-space: nowrap; flex: none; letter-spacing: -.18px; }
.url b { font-weight: 400; color: #111; margin-left: 6px; letter-spacing: -.55px; }
.star { margin-left: auto; margin-right: 3px; }
.ext-se { margin-left: 12px; }
.ext-bug { margin-left: 12px; }
.ext-chev { margin-left: 12px; }
.ext-fvd { margin-left: 11px; }
.masthead { height: 62px; flex: none; display: flex; }
.logo { margin-left: 1px; }
.welcome { margin-left: 172px; padding-top: 23px; width: 500px; font-size: 14.500px; line-height: 17px; }
.hello strong { letter-spacing: -.15px; }
.hello a { font-size: 12.700px; color: #444; }
.version { margin-top: -1px; }
.quick { margin-left: auto; margin-right: 3px; position: relative; z-index: 1; }
.gray-rule { height: 8px; width: 1604px; background: #dfdfdf; margin-left: 2px; flex: none; }
.green-rule { height: 4px; margin: 4px 3px 0 1px; background: linear-gradient(#b9db85 0 1px, #86c227 1px); flex: none; }
.titlebar { height: 20px; margin: 2px 3px 0 2px; background: #0092df; border-radius: 9px 9px 0 0; flex: none; color: #fff; font-weight: 700; font-size: 14.500px; line-height: 18px; padding-left: 11px; }
.title-under { height: 4px; margin: 0 2px 0 2px; background: linear-gradient(#c8e8dc 0 1px, #86c227 1px 3.700px, #fff 3.700px); flex: none; }
.content { flex: 1; display: flex; min-height: 0; margin-left: 3px; }
.side { width: 20px; flex: none; box-sizing: border-box; border-right: 1px solid #e8e6dc; box-shadow: inset -2px 0 #fff, inset -4px 0 #ecebe1; background: repeating-linear-gradient(135deg, #fff 0 2px, #efeee5 2px 4px); display: flex; flex-direction: column; }
.tab { width: 19px; box-sizing: border-box; display: flex; flex-direction: column; align-items: center; justify-content: space-between; }
.tab span { writing-mode: vertical-rl; transform: rotate(180deg); font-weight: 700; font-size: 15px; line-height: 16px; font-family: "Open Sans", sans-serif; letter-spacing: -.25px; }
.menu { height: 72px; background: #69bd24; border-radius: 0 0 6px 0; color: #e8f7d5; padding: 6px 0 6px; }
.fav { height: 92px; margin-top: 3px; background: #fff; border: 1px solid #e5dfd0; border-left: 0; border-radius: 0 0 6px 0; color: #b3ab92; padding: 6px 0 3px; }
.workspace { flex: 1; padding: 3px 6px 0 3px; min-width: 0; }
.card { background: #eff0e7; border: 1px solid #c8c8c8; box-sizing: border-box; }
.info { height: 177px; padding-left: 13px; }
.lookup { display: flex; height: 89px; }
.lbl { font-size: 13px; font-weight: 700; line-height: 15px; white-space: nowrap; display: block; }
.val { font-size: 13px; line-height: 15px; white-space: nowrap; }
.addr { letter-spacing: .065px; }
.code { letter-spacing: -.07px; }
.inputs { width: 146px; padding-top: 3px; }
.inputs input { display: block; box-sizing: border-box; width: 146px; height: 24px; border: 1px solid #0b6399; margin: 1px 0 0; padding: 0 1px; font: 13px "Liberation Sans", sans-serif; background: #fff; color: #000; outline: 0; }
.inputs .second { margin-top: 2px; }
.inputs .low { margin-top: 2px; }
.lenses { margin-left: 6px; padding-top: 14px; display: flex; flex-direction: column; gap: 11px; width: 44px; }
.pair-col { padding-top: 9px; display: flex; flex-direction: column; gap: 12px; }
.cod { width: 221px; }
.facts { display: flex; }
.fact-col { flex: none; }
.fact { height: 41px; }
.link { color: #123f3c; }
.money b { display: inline-block; width: 27px; }
.doc-lens { margin-top: 44px; margin-left: 2px; }
.tools { margin-top: 1px; height: 56px; display: flex; gap: 9.500px; padding: 4px 0 0 14px; }
.tool { width: 48px; height: 48px; padding: 0; flex: none; box-sizing: border-box; border: 1px solid #0b5d8c; background: transparent; overflow: hidden; }
.tool.tight { margin-left: -4px; }
.tool.white { background: linear-gradient(#fff, #fff) 0 0 / 42px 42px no-repeat; }
.blue-rule { height: 4px; flex: none; margin: 0 3px 0 4px; background: linear-gradient(#8fd0f0 0 1px, #0092df 1px 3px, #b8e0f4 3px); }
.foot { height: 20px; margin: 1px 3px 2px 4px; background: #86c227; border-radius: 0 0 9px 9px; flex: none; display: flex; align-items: center; justify-content: center; color: #f4faea; font: 700 16px/19px "Open Sans", sans-serif; padding-left: 1px; }
.cursor { position: absolute; left: 678px; top: 663px; }
</style>
